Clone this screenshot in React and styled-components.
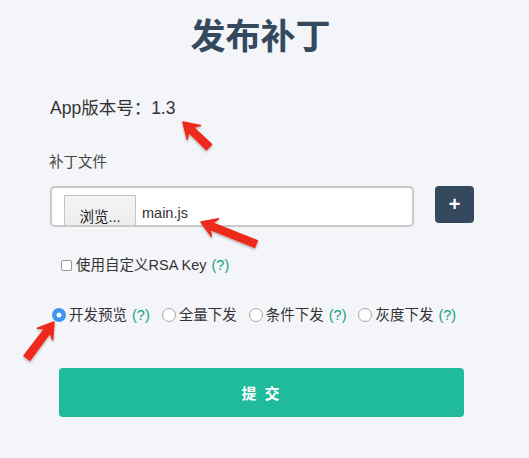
import React from "react"
import styled, { createGlobalStyle } from "styled-components"

const GlobalStyle = createGlobalStyle`
    body {
        margin: 0;
        background: #f3f5f8;
        font-family: "Liberation Sans", "Noto Sans CJK SC", sans-serif;
        color: #333;
    }
`

const ARROWS = [
    { tip: [183, 122], tail: [209, 147] },
    { tip: [201, 222], tail: [256, 244] },
    { tip: [54, 322], tail: [27, 358] },
]

function arrowPoints({ tip, tail }) {
    const dx = tip[0] - tail[0]
    const dy = tip[1] - tail[1]
    const len = Math.hypot(dx, dy)
    const d = [dx / len, dy / len]
    const n = [-d[1], d[0]]
    const at = (base, along, side) => [
        base[0] - d[0] * along + n[0] * side,
        base[1] - d[1] * along + n[1] * side,
    ]
    const pts = [
        tip,
        at(tip, 15, 9.5),
        at(tip, 11, 3.4),
        at(tail, 0, 3.6),
        at(tail, 0, -3.6),
        at(tip, 11, -3.4),
        at(tip, 15, -9.5),
    ]
    return pts.map(p => p[0].toFixed(1) + "," + p[1].toFixed(1)).join(" ")
}

function Radio({ checked, label, help }) {
    return (
        <RadioItem>
            <RadioDot checked = {checked}/>
            <span>{label}</span>
            {help && <Help>(?)</Help>}
        </RadioItem>
    )
}

export default function App() {
    return (
        <Page>
            <GlobalStyle/>
            <Title>发布补丁</Title>
            <Version>App版本号：1.3</Version>
            <Label>补丁文件</Label>
            <FileRow>
                <FileBox>
                    <Browse>浏览...</Browse>
                    <FileName>main.js</FileName>
                </FileBox>
                <PlusButton>+</PlusButton>
            </FileRow>
            <CheckRow>
                <CheckBox/>
                <span>使用自定义RSA Key</span>
                <Help>(?)</Help>
            </CheckRow>
            <RadioRow>
                <Radio checked label = "开发预览" help/>
                <Radio label = "全量下发"/>
                <Radio label = "条件下发" help/>
                <Radio label = "灰度下发" help/>
            </RadioRow>
            <Submit>提 交</Submit>
            <Overlay width = "529" height = "458">
                <defs>
                    <filter id = "shadow" x = "-50%" y = "-50%" width = "200%" height = "200%">
                        <feDropShadow dx = "0" dy = "1.5" stdDeviation = "1.2" floodColor = "#000" floodOpacity = "0.3"/>
                    </filter>
                </defs>
                {ARROWS.map((a, i) => (
                    <polygon key = {i} points = {arrowPoints(a)} fill = "#ee2a1a"
                        stroke = "#ee2a1a" strokeWidth = "1.5" strokeLinejoin = "round" filter = "url(#shadow)"/>
                ))}
            </Overlay>
        </Page>
    )
}

const Page = styled.div`
    position: relative;
    width: 529px;
    height: 458px;
    padding-top: 16px;
    box-sizing: border-box;
    overflow: hidden;
`
const Title = styled.h1`
    margin: 0;
    padding-right: 8px;
    text-align: center;
    font-size: 35px;
    line-height: 42px;
    font-weight: bold;
    color: #34495e;
`
const Version = styled.div`
    margin: 38px 0 0 50px;
    font-size: 17.5px;
    line-height: 24px;
    color: #333;
`
const Label = styled.div`
    margin: 32px 0 0 49px;
    font-size: 14.5px;
    line-height: 20px;
    color: #444;
`
const FileRow = styled.div`
    display: flex;
    align-items: flex-start;
    margin: 14px 0 0 50px;
    gap: 21px;
`
const FileBox = styled.div`
    width: 364px;
    height: 41px;
    box-sizing: border-box;
    border: 2px solid #c9c9c9;
    border-radius: 5px;
    background: #fff;
    overflow: hidden;
    display: flex;
    align-items: flex-start;
    padding: 7px 0 0 12px;
    gap: 6px;
`
const Browse = styled.div`
    width: 72px;
    height: 36px;
    box-sizing: border-box;
    border: 1px solid #c4c4c4;
    background: linear-gradient(#f4f4f4, #ececec);
    font-size: 14.5px;
    color: #222;
    text-align: center;
    padding-top: 9px;
`
const FileName = styled.div`
    padding-top: 10px;
    font-size: 14.5px;
    color: #333;
`
const PlusButton = styled.div`
    width: 39px;
    height: 37px;
    border-radius: 4px;
    background: #34495e;
    color: #fff;
    font-size: 20px;
    font-weight: bold;
    display: flex;
    align-items: center;
    justify-content: center;
`
const CheckRow = styled.div`
    display: flex;
    align-items: center;
    margin: 28px 0 0 61px;
    font-size: 14.5px;
    line-height: 20px;
    color: #333;
`
const CheckBox = styled.span`
    width: 11px;
    height: 11px;
    box-sizing: border-box;
    border: 1px solid #9a9a9a;
    border-radius: 2px;
    background: #fff;
    margin-right: 4px;
`
const Help = styled.span`
    margin-left: 5px;
    color: #16a085;
`
const RadioRow = styled.div`
    display: flex;
    align-items: center;
    margin: 30px 0 0 52px;
    gap: 12px;
    font-size: 14.5px;
    line-height: 20px;
    color: #333;
`
const RadioItem = styled.div`
    display: flex;
    align-items: center;
`
const RadioDot = styled.span`
    width: 14px;
    height: 14px;
    box-sizing: border-box;
    border-radius: 50%;
    margin-right: 3px;
    border: ${p => p.checked ? "none" : "1px solid #a8a8a8"};
    background: ${p => p.checked ? "radial-gradient(circle, #fff 0 2.2px, #3d95ef 2.8px)" : "#fff"};
`
const Submit = styled.div`
    margin: 43px 0 0 59px;
    width: 405px;
    height: 49px;
    border-radius: 4px;
    background: #1fbb9b;
    color: #fff;
    font-size: 15px;
    font-weight: bold;
    letter-spacing: 2px;
    display: flex;
    align-items: center;
    justify-content: center;
`
const Overlay = styled.svg`
    position: absolute;
    left: 0;
    top: 0;
    pointer-events: none;
`
